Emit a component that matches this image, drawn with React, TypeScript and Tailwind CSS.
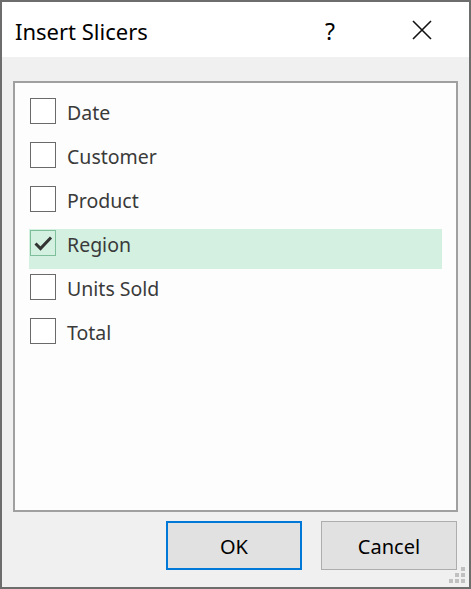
import React from 'react';

const fields = ['Date', 'Customer', 'Product', 'Region', 'Units Sold', 'Total'];

const FieldRow: React.FC<{ label: string; checked: boolean }> = ({ label, checked }) => {
  return (
    <div className="h-[44px]">
      <div className={`h-[40px] flex items-start ${checked ? 'bg-[#d3f0e0]' : ''}`}>
        <div
          className={`mt-[1px] ml-[1px] w-[26px] h-[26px] shrink-0 border flex items-center justify-center ${checked ? 'border-[#7cbf9a]' : 'border-[#6a6a6a] bg-white'}`}
        >
          {checked && (
            <svg width="24" height="24" viewBox="0 0 24 24">
              <path d="M4.5 12.5 L9.5 17.5 L20 6.5" fill="none" stroke="#333" strokeWidth="3" />
            </svg>
          )}
        </div>
        <span className="ml-[11px] mt-[2px] h-[28px] leading-[28px] text-[19.5px] text-[#3a3a3a]">{label}</span>
      </div>
    </div>
  );
};

export default function App() {
  return (
    <div
      className="w-[471px] h-[589px] border-2 border-[#6d6d6d] bg-[#f0f0f0] flex flex-col"
      style={{ fontFamily: '"Noto Sans", "Open Sans", sans-serif' }}
    >
      {/* title bar */}
      <div className="h-[55px] bg-white flex items-center shrink-0">
        <span className="pl-[13px] pt-[3px] text-[22px] text-black">Insert Slicers</span>
        <span className="ml-auto mr-[77px] pt-[3px] text-[23px] text-black">?</span>
        <svg width="20" height="20" viewBox="0 0 20 20" className="mr-[37px] mt-[1px]">
          <path d="M1 1 L19 19 M19 1 L1 19" stroke="#111" strokeWidth="1.6" fill="none" />
        </svg>
      </div>

      <div className="flex-1 flex flex-col px-[11px] pt-[24px]">
        <div className="h-[431px] border-2 border-[#a0a0a0] bg-[#fdfdfd] px-[14px] pt-[14px]">
          {fields.map((f) => (
            <FieldRow key={f} label={f} checked={f === 'Region'} />
          ))}
        </div>

        <div className="mt-[9px] flex justify-end gap-[19px] pr-[1px]">
          <button className="w-[136px] h-[49px] border-2 border-[#0078d7] bg-[#e1e1e1] pt-[2px] text-[20px] text-black">
            OK
          </button>
          <button className="w-[136px] h-[49px] border border-[#adadad] bg-[#e1e1e1] pt-[2px] text-[20px] text-black">
            Cancel
          </button>
        </div>

        {/* resize grip */}
        <div className="relative flex-1">
          <svg width="18" height="18" viewBox="0 0 18 18" className="absolute right-[-9px] bottom-[2px]">
            <rect x="12" y="0" width="4" height="4" fill="#c0c0c0" />
            <rect x="6" y="6" width="4" height="4" fill="#c0c0c0" />
            <rect x="12" y="6" width="4" height="4" fill="#c0c0c0" />
            <rect x="0" y="12" width="4" height="4" fill="#c0c0c0" />
            <rect x="6" y="12" width="4" height="4" fill="#c0c0c0" />
            <rect x="12" y="12" width="4" height="4" fill="#c0c0c0" />
          </svg>
        </div>
      </div>
    </div>
  );
}
